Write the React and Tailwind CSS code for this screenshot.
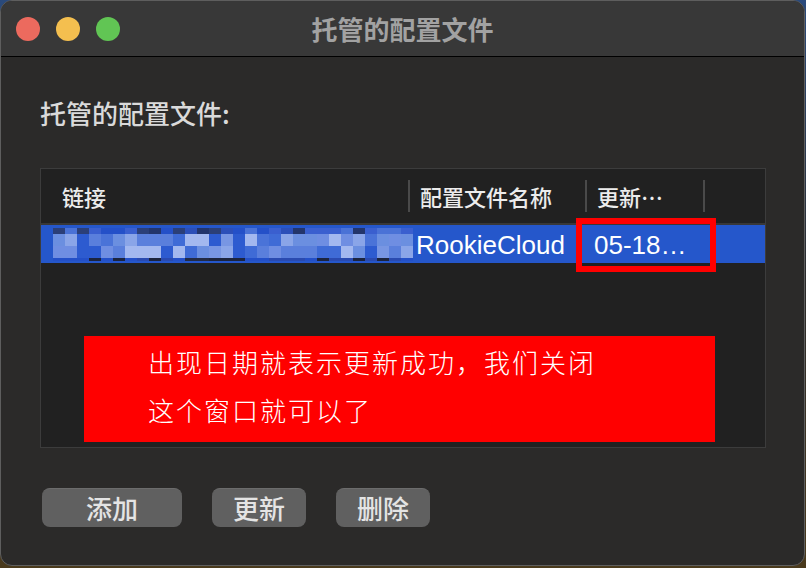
import React from "react";

const ui = { fontFamily: '"Liberation Sans", "Noto Sans CJK SC", sans-serif' };
const cjk = { fontFamily: '"Noto Sans CJK SC", sans-serif' };

const topPal = ["bg-[#2b3f78]", "bg-[#2c4fb8]", "bg-[#2450c8]", "bg-[#3a5fcf]", "bg-[#23356b]", "bg-[#4a72d6]"];
const midPal = ["bg-[#3f6bd6]", "bg-[#6b8fe0]", "bg-[#8aa5e8]", "bg-[#2d5bd0]", "bg-[#5a7fdc]", "bg-[#a3b8ef]", "bg-[#4a73d8]", "bg-[#7896e3]", "bg-[#6f8ee2]"];
const botPal = ["bg-[#1c243e]", "bg-[#2450c8]", "bg-[#232b45]", "bg-[#2a4ab0]"];

function pick(pal, c, r) {
  const h = Math.abs(Math.sin(c * 12.9898 + r * 78.233) * 43758.5453);
  return pal[Math.floor((h - Math.floor(h)) * pal.length)];
}

function Mosaic() {
  const cols = Array.from({ length: 30 }, (_, i) => i);
  const rows = [
    { h: "h-[6px]", pal: topPal },
    { h: "h-[12px]", pal: midPal },
    { h: "h-[12px]", pal: midPal },
    { h: "h-[3px]", pal: botPal },
  ];
  return (
    <div className="flex flex-col">
      {rows.map((row, r) => (
        <div key={r} className={`flex ${row.h}`}>
          {cols.map((c) => (
            <div key={c} className={`w-[12px] ${pick(row.pal, c, r)}`} />
          ))}
        </div>
      ))}
    </div>
  );
}

function Btn({ w, children }) {
  return (
    <button
      className={`${w} h-[39px] rounded-[8px] bg-[#606060] border-t border-[#6c6c6c] text-[26px] leading-none text-[#e4e4e4] font-medium flex items-center justify-center`}
      style={cjk}
    >
      {children}
    </button>
  );
}

export default function App() {
  return (
    <div className="w-[806px] h-[568px] bg-gradient-to-b from-[#2a4a7c] via-[#2a2a2a] to-[#4a3a1c] overflow-hidden" style={ui}>
      <div className="w-[805px] h-[566px] rounded-[12px] border border-[#5e5e5e] bg-[#2b2a29] overflow-hidden flex flex-col">
        {/* Title bar */}
        <div className="relative h-[56px] bg-[#383838] border-b border-black flex items-center shrink-0">
          <div className="flex gap-[16px] pl-[15px]">
            <div className="w-[24px] h-[24px] rounded-full bg-[#ec6a5e]" />
            <div className="w-[24px] h-[24px] rounded-full bg-[#f4bf4f]" />
            <div className="w-[24px] h-[24px] rounded-full bg-[#61c554]" />
          </div>
          <div className="absolute inset-0 flex items-center justify-center text-[26px] font-bold text-[#a2a2a2]" style={cjk}>
            托管的配置文件
          </div>
        </div>

        {/* Body */}
        <div className="flex flex-col pl-[39px] pt-[40px]">
          <div className="h-[32px] text-[26px] leading-[32px] text-[#dadada] font-medium" style={cjk}>
            托管的配置文件:
          </div>

          {/* Table */}
          <div className="relative mt-[39px] w-[726px] h-[280px] border border-[#3c3c3c] bg-[#212121]">
            <div className="flex h-[56px] border-b-2 border-[#383838] items-center text-[22px] text-[#ececec] font-medium" style={cjk}>
              <div className="w-[367px] pl-[21px] h-[32px] flex items-center">链接</div>
              <div className="w-[2px] h-[32px] bg-[#4a4a4a]" />
              <div className="w-[175px] pl-[10px] h-[32px] flex items-center">配置文件名称</div>
              <div className="w-[2px] h-[32px] bg-[#4a4a4a]" />
              <div className="w-[116px] pl-[10px] h-[32px] flex items-center">更新…</div>
              <div className="w-[2px] h-[32px] bg-[#4a4a4a]" />
            </div>
            <div className="flex h-[38px] bg-[#2557cb] items-center text-[26px] text-white">
              <div className="w-[368px] pl-[12px] flex items-center">
                <Mosaic />
              </div>
              <div className="w-[177px] pl-[7px] pt-[2px] leading-none">RookieCloud</div>
              <div className="w-[118px] pl-[8px] pt-[2px] leading-none">05-18…</div>
            </div>

            {/* Red highlight around date */}
            <div className="absolute left-[535px] top-[49px] w-[140px] h-[54px] border-[6px] border-[#ff0000]" />

            {/* Annotation */}
            <div
              className="absolute left-[43px] top-[167px] w-[631px] h-[106px] bg-[#ff0000] pl-[64px] pt-[2px] text-[26px] leading-[48px] tracking-[2px] text-white font-light"
              style={cjk}
            >
              <div>出现日期就表示更新成功，我们关闭</div>
              <div>这个窗口就可以了</div>
            </div>
          </div>

          {/* Buttons */}
          <div className="flex gap-[30px] mt-[40px] pl-[2px]">
            <Btn w="w-[140px]">添加</Btn>
            <Btn w="w-[94px]">更新</Btn>
            <Btn w="w-[94px]">删除</Btn>
          </div>
        </div>
      </div>
    </div>
  );
}
